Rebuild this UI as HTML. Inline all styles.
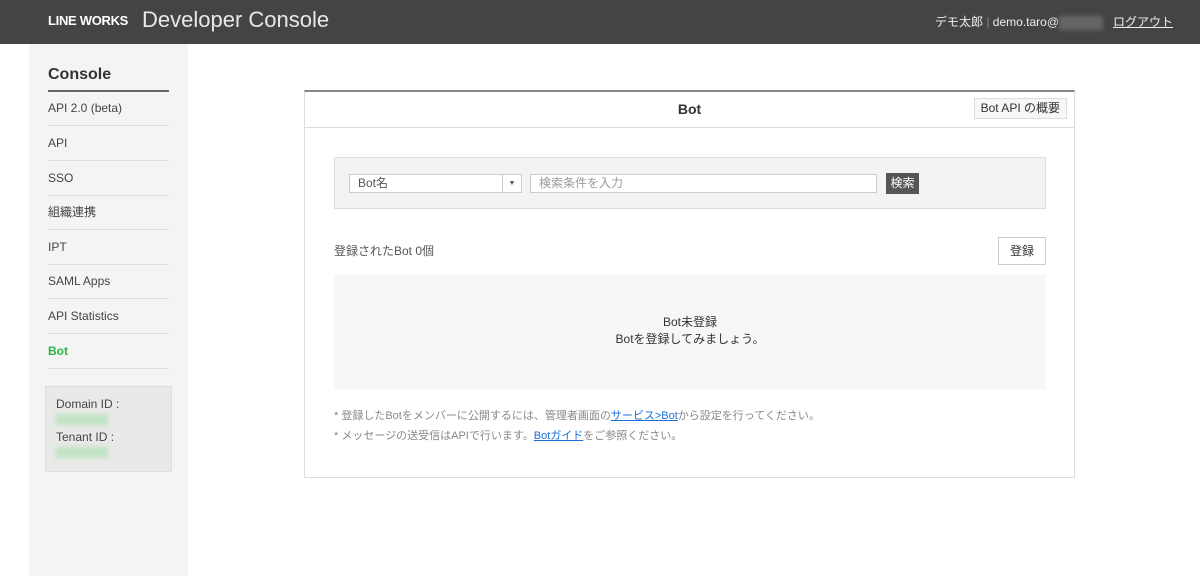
<!DOCTYPE html>
<html><head><meta charset="utf-8"><style>
*{margin:0;padding:0;box-sizing:border-box}
body{width:1200px;height:576px;overflow:hidden;background:#fff;font-family:"Liberation Sans","Noto Sans CJK JP",sans-serif;font-size:12px;color:#333;position:relative}
.hdr{position:absolute;left:0;top:0;width:1200px;height:44px;background:#444;color:#fff}
.logo{position:absolute;left:48px;top:13px;font-weight:bold;font-size:13px;letter-spacing:-0.3px}
.title{position:absolute;left:142px;top:7px;font-size:22px;font-weight:300;color:#e8e8e8}
.user{position:absolute;left:935px;top:13px;font-size:12px;color:#eee;white-space:nowrap}
.blur{display:inline-block;width:44px;height:14px;background:#666;vertical-align:middle;filter:blur(2px)}
.side{position:absolute;left:29px;top:44px;width:159px;height:532px;background:#f4f4f4}
.side h2{position:absolute;left:19px;top:22px;font-size:16px;font-weight:bold;color:#333}
.hl{position:absolute;left:19px;top:46px;width:121px;height:2px;background:#666}
.it{position:absolute;left:19px;width:121px;height:35px;border-bottom:1px solid #ddd;line-height:34px;font-size:12px;color:#444}
.ids{position:absolute;left:16px;top:342px;width:127px;height:86px;background:#e9e9e7;border:1px solid #ddd;font-size:12px;color:#444}
.g{display:block;width:52px;height:11px;background:#bfe3c2;filter:blur(2px);margin:3px 0 5px 10px}
.panel{position:absolute;left:304px;top:90px;width:771px;height:388px;border:1px solid #ddd;border-top:2px solid #888}
.ph{height:36px;border-bottom:1px solid #ddd;text-align:center;line-height:34px;font-size:14px;font-weight:bold;color:#333}
.api{position:absolute;right:7px;top:6px;height:21px;padding:0 6px;border:1px solid #ddd;background:#f7f7f7;font-size:12px;font-weight:normal;line-height:19px;color:#333}
.sb{position:absolute;left:29px;top:65px;width:712px;height:52px;background:#f3f3f3;border:1px solid #ddd}
.sel{position:absolute;left:14px;top:16px;width:173px;height:19px;background:#fff;border:1px solid #ccc;color:#555;padding-left:8px;line-height:17px}
.sel i{position:absolute;right:0;top:0;width:19px;height:17px;border-left:1px solid #ccc;font-style:normal;font-size:7px;text-align:center}
.inp{position:absolute;left:195px;top:16px;width:347px;height:19px;background:#fff;border:1px solid #ccc;color:#999;padding-left:8px;line-height:17px}
.btn{position:absolute;left:551px;top:15px;width:33px;height:21px;background:#555;color:#fff;text-align:center;line-height:21px;font-size:12px}
.cnt{position:absolute;left:29px;top:150px;color:#555}
.reg{position:absolute;left:693px;top:145px;width:48px;height:28px;border:1px solid #ccc;background:#fff;text-align:center;line-height:26px}
.empty{position:absolute;left:29px;top:182px;width:712px;height:116px;background:#f7f7f7;text-align:center;padding-top:40px;line-height:17px;color:#333}
.note{position:absolute;left:29px;font-size:11px;color:#888}
a{color:#1a6fd8;text-decoration:underline}
</style></head><body>
<div class="hdr"><div class="logo">LINE WORKS</div><div class="title">Developer Console</div>
<div class="user">デモ太郎 <span style="color:#888">|</span> demo.taro@<span class="blur"></span>&nbsp;&nbsp;&nbsp;<u>ログアウト</u></div></div>
<div class="side"><h2>Console</h2><div class="hl"></div>
<div class="it" style="top:47px">API 2.0 (beta)</div>
<div class="it" style="top:82px">API</div>
<div class="it" style="top:117px">SSO</div>
<div class="it" style="top:151px">組織連携</div>
<div class="it" style="top:186px">IPT</div>
<div class="it" style="top:220px">SAML Apps</div>
<div class="it" style="top:255px">API Statistics</div>
<div class="it" style="top:290px;color:#2bb54a;font-weight:bold">Bot</div>
<div class="ids"><div style="padding:10px 0 0 10px">Domain ID :</div><span class="g"></span><div style="padding-left:10px">Tenant ID :</div><span class="g"></span></div>
</div>
<div class="panel"><div class="ph">Bot<span class="api">Bot API の概要</span></div>
<div class="sb"><div class="sel">Bot名<i>▼</i></div><div class="inp">検索条件を入力</div><div class="btn">検索</div></div>
<div class="cnt">登録されたBot 0個</div><div class="reg">登録</div>
<div class="empty">Bot未登録<br>Botを登録してみましょう。</div>
<div class="note" style="top:315px">* 登録したBotをメンバーに公開するには、管理者画面の<a>サービス&gt;Bot</a>から設定を行ってください。</div>
<div class="note" style="top:335px">* メッセージの送受信はAPIで行います。<a>Botガイド</a>をご参照ください。</div>
</div>
</body></html>
